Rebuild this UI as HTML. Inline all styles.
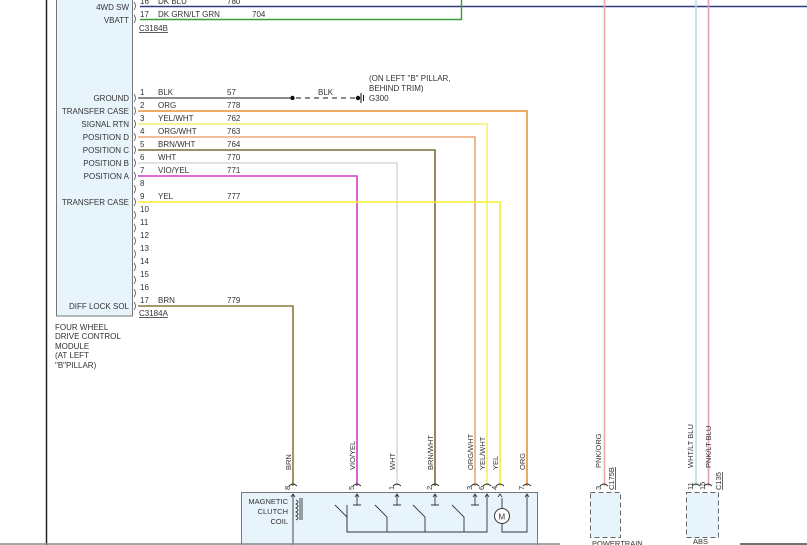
<!DOCTYPE html>
<html><head><meta charset="utf-8"><style>
html,body{margin:0;padding:0;background:#fff;width:807px;height:545px;overflow:hidden}
svg{display:block;font-family:"Liberation Sans",sans-serif;font-size:8px;fill:#333}
</style></head><body>
<svg width="807" height="545" viewBox="0 0 807 545" xmlns="http://www.w3.org/2000/svg">
<line x1="46.5" y1="0" x2="46.5" y2="545" stroke="#222" stroke-width="1.5"/>
<rect x="56.5" y="-2" width="76" height="318" fill="#e8f4fc" stroke="#777" stroke-width="1"/>
<!-- top wires -->
<line x1="140" y1="6.5" x2="807" y2="6.5" stroke="#2d3e80" stroke-width="1.6"/>
<polyline points="140,19.5 461.5,19.5 461.5,0" fill="none" stroke="#3a9a3a" stroke-width="1.4"/>
<g text-anchor="end">
<text x="129" y="10">4WD SW</text><text x="129" y="23">VBATT</text>
<text x="129" y="101">GROUND</text><text x="129" y="114">TRANSFER CASE</text>
<text x="129" y="127">SIGNAL RTN</text><text x="129" y="140">POSITION D</text>
<text x="129" y="153">POSITION C</text><text x="129" y="166">POSITION B</text>
<text x="129" y="179">POSITION A</text><text x="129" y="205">TRANSFER CASE</text>
<text x="129" y="309">DIFF LOCK SOL</text>
</g>
<text x="140" y="4">16</text><text x="158" y="4">DK BLU</text><text x="227" y="4">780</text>
<text x="140" y="17">17</text><text x="158" y="17">DK GRN/LT GRN</text><text x="252" y="17">704</text>
<text x="139" y="31" text-decoration="underline">C3184B</text>
<!-- connector brackets -->
<g fill="none" stroke="#555" stroke-width="0.8">
<path d="M134,2 q3,4 0,8 M134,15 q3,4 0,8"/>
<path d="M134,94 q3,4 0,8 M134,107 q3,4 0,8 M134,120 q3,4 0,8 M134,133 q3,4 0,8 M134,146 q3,4 0,8 M134,159 q3,4 0,8 M134,172 q3,4 0,8 M134,185 q3,4 0,8 M134,198 q3,4 0,8 M134,211 q3,4 0,8 M134,224 q3,4 0,8 M134,237 q3,4 0,8 M134,250 q3,4 0,8 M134,263 q3,4 0,8 M134,276 q3,4 0,8 M134,289 q3,4 0,8 M134,302 q3,4 0,8"/>
</g>
<g>
<text x="140" y="95">1</text><text x="158" y="95">BLK</text><text x="227" y="95">57</text>
<text x="140" y="108">2</text><text x="158" y="108">ORG</text><text x="227" y="108">778</text>
<text x="140" y="121">3</text><text x="158" y="121">YEL/WHT</text><text x="227" y="121">762</text>
<text x="140" y="134">4</text><text x="158" y="134">ORG/WHT</text><text x="227" y="134">763</text>
<text x="140" y="147">5</text><text x="158" y="147">BRN/WHT</text><text x="227" y="147">764</text>
<text x="140" y="160">6</text><text x="158" y="160">WHT</text><text x="227" y="160">770</text>
<text x="140" y="173">7</text><text x="158" y="173">VIO/YEL</text><text x="227" y="173">771</text>
<text x="140" y="186">8</text>
<text x="140" y="199">9</text><text x="158" y="199">YEL</text><text x="227" y="199">777</text>
<text x="140" y="212">10</text><text x="140" y="225">11</text><text x="140" y="238">12</text><text x="140" y="251">13</text><text x="140" y="264">14</text><text x="140" y="277">15</text><text x="140" y="290">16</text>
<text x="140" y="303">17</text><text x="158" y="303">BRN</text><text x="227" y="303">779</text>
<text x="139" y="316" text-decoration="underline">C3184A</text>
<text x="55" y="330">FOUR WHEEL</text><text x="55" y="339">DRIVE CONTROL</text><text x="55" y="349">MODULE</text><text x="55" y="358">(AT LEFT</text><text x="55" y="368">"B"PILLAR)</text>
</g>
<!-- ground -->
<line x1="138" y1="98" x2="292" y2="98" stroke="#666" stroke-width="1.4"/>
<circle cx="292.5" cy="98" r="2.2" fill="#111"/>
<line x1="296" y1="98" x2="355" y2="98" stroke="#444" stroke-width="1.2" stroke-dasharray="5,4"/>
<circle cx="358" cy="98" r="2.2" fill="#111"/>
<line x1="361" y1="93" x2="361" y2="103" stroke="#111"/><line x1="363.5" y1="95" x2="363.5" y2="101" stroke="#111"/>
<text x="318" y="95">BLK</text>
<text x="369" y="81">(ON LEFT "B" PILLAR,</text><text x="369" y="91">BEHIND TRIM)</text><text x="369" y="101">G300</text>
<!-- wires -->
<g fill="none" stroke-width="1.6">
<polyline points="138,111 527,111 527,486" stroke="#e8913a"/>
<polyline points="138,124 487,124 487,486" stroke="#f2ef70"/>
<polyline points="138,137 475,137 475,486" stroke="#eda878"/>
<polyline points="138,150 435,150 435,486" stroke="#7a6a3a"/>
<polyline points="138,163 397,163 397,486" stroke="#d8d8d8"/>
<polyline points="138,176 357,176 357,486" stroke="#d23cc8"/>
<polyline points="138,202 500,202 500,486" stroke="#f5ef30"/>
<polyline points="138,306 293,306 293,486" stroke="#8c7a3a"/>
<line x1="604.5" y1="0" x2="604.5" y2="486" stroke="#f0a8a8"/>
<line x1="696" y1="0" x2="696" y2="486" stroke="#b8e0e8"/>
<line x1="708.5" y1="0" x2="708.5" y2="486" stroke="#e4a0b8"/>
</g>
<!-- rotated wire labels -->
<g font-size="7.5">
<text transform="translate(291,470) rotate(-90)">BRN</text>
<text transform="translate(355,470) rotate(-90)">VIO/YEL</text>
<text transform="translate(395,470) rotate(-90)">WHT</text>
<text transform="translate(433,470) rotate(-90)">BRN/WHT</text>
<text transform="translate(473,470) rotate(-90)">ORG/WHT</text>
<text transform="translate(485,470) rotate(-90)">YEL/WHT</text>
<text transform="translate(498,470) rotate(-90)">YEL</text>
<text transform="translate(525,470) rotate(-90)">ORG</text>
<text transform="translate(601,468) rotate(-90)">PNK/ORG</text>
<text transform="translate(693,468) rotate(-90)">WHT/LT BLU</text>
<text transform="translate(711,468) rotate(-90)">PNK/LT BLU</text>
<text transform="translate(290,490) rotate(-90)">8</text><text transform="translate(354,490) rotate(-90)">5</text>
<text transform="translate(394,490) rotate(-90)">1</text><text transform="translate(432,490) rotate(-90)">2</text>
<text transform="translate(472,490) rotate(-90)">3</text><text transform="translate(484,490) rotate(-90)">6</text>
<text transform="translate(497,490) rotate(-90)">4</text><text transform="translate(524,490) rotate(-90)">7</text>
<text transform="translate(601,490) rotate(-90)">3</text>
<text transform="translate(693,490) rotate(-90)">11</text><text transform="translate(705,490) rotate(-90)">15</text>
<text transform="translate(614,490) rotate(-90)" text-decoration="underline">C175B</text>
<text transform="translate(721,490) rotate(-90)" text-decoration="underline">C135</text>
</g>
<!-- bottom box -->
<rect x="241.5" y="492.5" width="296" height="60" fill="#e8f4fc" stroke="#777"/>
<g text-anchor="end" font-size="7.5"><text x="288" y="504">MAGNETIC</text><text x="288" y="514">CLUTCH</text><text x="288" y="524">COIL</text></g>
<g fill="none" stroke="#333" stroke-width="0.9">
<path d="M289,486 q4,-4 8,0 M353,486 q4,-4 8,0 M393,486 q4,-4 8,0 M431,486 q4,-4 8,0 M471,486 q4,-4 8,0 M483,486 q4,-4 8,0 M496,486 q4,-4 8,0 M523,486 q4,-4 8,0 M600,486 q4,-4 8,0 M692,486 q4,-4 8,0 M704,486 q4,-4 8,0"/>
<path d="M293,494 v51 M357,494 v11 M397,494 v11 M435,494 v11 M475,494 v11 M487,494 v38 h-140 v-27 M527,494 v38 h-25 v-8 M502,498 v10"/>
<path d="M296,500 q4,2 0,4 q4,2 0,4 q4,2 0,4 q4,2 0,4 q4,2 0,4"/>
<path d="M300,498 v22 M302,498 v22"/>
<path d="M335,505 l12,12 v15 M375,505 l12,12 v15 M413,505 l12,12 v15 M452,505 l12,12 v15"/>
<path d="M353,505 h8 M393,505 h8 M431,505 h8 M471,505 h8"/>
<path d="M291,497 l2,-3 l2,3 M355,497 l2,-3 l2,3 M395,497 l2,-3 l2,3 M433,497 l2,-3 l2,3 M473,497 l2,-3 l2,3 M485,497 l2,-3 l2,3 M498,497 l2,-3 l2,3 M525,497 l2,-3 l2,3"/>
</g>
<circle cx="502" cy="516" r="7.5" fill="#fff" stroke="#333"/>
<text x="498.5" y="519.5" font-size="8">M</text>
<!-- dashed boxes -->
<rect x="590.5" y="492.5" width="30" height="45" fill="#e8f4fc" stroke="#666" stroke-dasharray="5,3"/>
<rect x="686.5" y="492.5" width="32" height="45" fill="#e8f4fc" stroke="#666" stroke-dasharray="5,3"/>
<text x="592" y="546" font-size="7.5">POWERTRAIN</text>
<text x="693" y="544" font-size="7.5">ABS</text>
<line x1="0" y1="544" x2="560" y2="544" stroke="#888" stroke-width="1.5"/>
<line x1="740" y1="544" x2="807" y2="544" stroke="#444" stroke-width="1.5"/>
</svg>
</body></html>
